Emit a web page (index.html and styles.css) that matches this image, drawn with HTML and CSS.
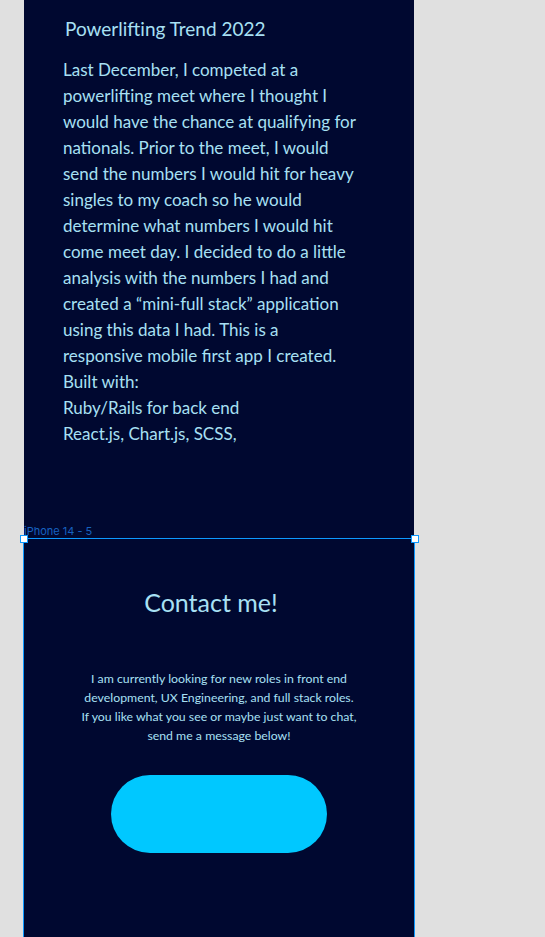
FILE: index.html
```html
<!DOCTYPE html>
<html>
<head>
<meta charset="utf-8">
<link rel="stylesheet" href="styles.css">
</head>
<body>
<div class="canvas">
  <section class="frame frame-top">
    <h2 class="post-title">Powerlifting Trend 2022</h2>
    <p class="post-body">
      <span>Last December, I competed at a</span>
      <span>powerlifting meet where I thought I</span>
      <span>would have the chance at qualifying for</span>
      <span>nationals. Prior to the meet, I would</span>
      <span>send the numbers I would hit for heavy</span>
      <span>singles to my coach so he would</span>
      <span>determine what numbers I would hit</span>
      <span>come meet day. I decided to do a little</span>
      <span>analysis with the numbers I had and</span>
      <span>created a “mini-full stack” application</span>
      <span>using this data I had. This is a</span>
      <span>responsive mobile first app I created.</span>
      <span>Built with:</span>
      <span>Ruby/Rails for back end</span>
      <span>React.js, Chart.js, SCSS,</span>
    </p>
  </section>
  <section class="frame frame-contact">
    <div class="frame-label">iPhone 14 - 5</div>
    <span class="handle handle-left"></span>
    <span class="handle handle-right"></span>
    <h2 class="contact-title">Contact me!</h2>
    <p class="contact-text">
      <span>I am currently looking for new roles in front end</span>
      <span>development, UX Engineering, and full stack roles.</span>
      <span>If you like what you see or maybe just want to chat,</span>
      <span>send me a message below!</span>
    </p>
    <div class="contact-button"></div>
  </section>
</div>
</body>
</html>
```
FILE: styles.css
```css
* { box-sizing: border-box; }
html, body { margin: 0; padding: 0; }
body {
  background: #e0e0e0;
  width: 545px;
  height: 937px;
  overflow: hidden;
  font-family: Lato, "Open Sans", sans-serif;
}
.canvas {
  padding-left: 24px;
  display: flex;
  flex-direction: column;
}
.frame {
  width: 390px;
  background: #000830;
  color: #a8e0f4;
}
.frame-top {
  height: 539px;
  padding: 16px 0 0 39px;
}
.post-title {
  margin: 0 0 0 2px;
  font-weight: 400;
  font-size: 19px;
  line-height: 26px;
}
.post-body {
  margin: 15px 0 0;
  font-size: 17px;
  line-height: 26px;
  display: flex;
  flex-direction: column;
  white-space: nowrap;
}
.frame-contact {
  position: relative;
  height: 420px;
  outline: 1px solid #0d99ff;
  display: flex;
  flex-direction: column;
  align-items: center;
  padding-top: 47px;
}
.frame-label {
  position: absolute;
  left: 0;
  top: -14px;
  font-family: Inter, sans-serif;
  font-size: 11px;
  line-height: 13px;
  color: #1762c0;
}
.handle {
  position: absolute;
  top: -4px;
  width: 8px;
  height: 8px;
  background: #fff;
  border: 1px solid #0d99ff;
}
.handle-left { left: -4px; }
.handle-right { right: -5px; }
.contact-title {
  margin: 0 16px 0 0;
  font-weight: 400;
  font-size: 25px;
  line-height: 32px;
}
.contact-text {
  margin: 51px 0 0;
  font-size: 12.3px;
  line-height: 19px;
  text-align: center;
  display: flex;
  flex-direction: column;
  align-items: center;
  white-space: nowrap;
}
.contact-button {
  margin-top: 30px;
  width: 216px;
  height: 78px;
  border-radius: 39px;
  background: #00c8ff;
}
```
